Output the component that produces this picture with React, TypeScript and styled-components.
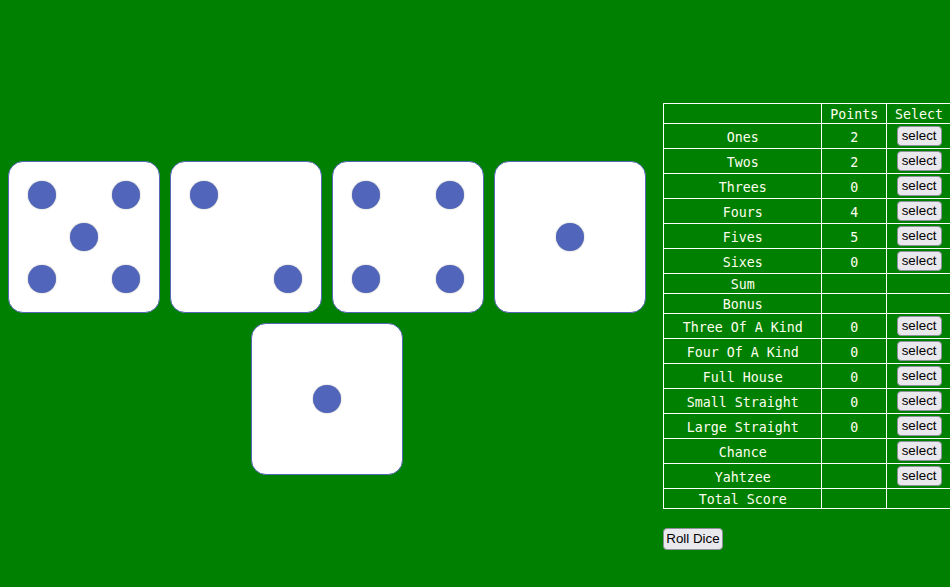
import React from "react";
import styled, { createGlobalStyle } from "styled-components";

const GlobalStyle = createGlobalStyle`
  html {
    overflow: hidden;
    background: #008000;
  }
  body {
    margin: 8px 0 8px 8px;
    background: #008000;
    font-family: "DejaVu Sans Mono", monospace;
  }
`;

const Page = styled.div`
  display: flex;
  align-items: flex-start;
  overflow: hidden;
  height: 571px;
`;

const DiceArea = styled.div`
  flex: 0 0 638px;
  width: 638px;
  margin-top: 153px;
  display: flex;
  flex-wrap: wrap;
  justify-content: center;
  gap: 10px;
`;

const Die = styled.div`
  width: 150px;
  height: 150px;
  box-sizing: content-box;
  border: 1px solid #5667b5;
  border-radius: 15px;
  background: #ffffff;
  display: grid;
  grid-template-columns: repeat(3, 28px);
  grid-template-rows: repeat(3, 28px);
  gap: 14px;
  align-content: center;
  justify-content: center;
`;

const Pip = styled.div<{ $on: boolean }>`
  width: 28px;
  height: 28px;
  border-radius: 50%;
  background: ${(p) => (p.$on ? "#5166bb" : "transparent")};
  box-shadow: ${(p) => (p.$on ? "0 0 1.5px rgba(80, 80, 80, 0.6)" : "none")};
`;

const Sidebar = styled.div`
  flex: 0 0 auto;
  margin-left: 17px;
  margin-top: 95px;
  display: flex;
  flex-direction: column;
  align-items: flex-start;
`;

const Table = styled.table`
  border-collapse: collapse;
  width: 289px;
  color: #fffff0;
  font-family: "DejaVu Sans Mono", monospace;
  font-size: 13.3px;
`;

const Cell = styled.td<{ $btn?: boolean }>`
  border: 1px solid #ffffff;
  text-align: center;
  vertical-align: middle;
  line-height: 17px;
  padding: ${(p) => (p.$btn ? "2px 0" : "2px 0 0")};
  white-space: nowrap;
`;

const HeadCell = styled.th<{ $w: number }>`
  width: ${(p) => p.$w}px;
  border: 1px solid #ffffff;
  text-align: center;
  vertical-align: middle;
  line-height: 17px;
  padding: 2px 0 0;
  font-weight: normal;
`;

const SelectButton = styled.button`
  font-family: "Liberation Sans", Arial, sans-serif;
  font-size: 13.33px;
  height: 20px;
  line-height: 16px;
  padding: 0 4px;
  border: 1px solid #8f8f9d;
  border-radius: 4px;
  background: #e9e9ed;
  color: #000;
  display: block;
  margin: 0 auto;
`;

const RollButton = styled.button`
  margin-top: 19px;
  font-family: "Liberation Sans", Arial, sans-serif;
  font-size: 13.33px;
  height: 22px;
  width: 60px;
  line-height: 18px;
  padding: 0;
  border: 1px solid #8f8f9d;
  border-radius: 4px;
  background: #e9e9ed;
  color: #000;
`;

const pipMap: Record<number, number[]> = {
  1: [4],
  2: [0, 8],
  3: [0, 4, 8],
  4: [0, 2, 6, 8],
  5: [0, 2, 4, 6, 8],
  6: [0, 2, 3, 5, 6, 8],
};

const dice = [5, 2, 4, 1, 1];

type Row = { name: string; points?: string; select: boolean };

const rows: Row[] = [
  { name: "Ones", points: "2", select: true },
  { name: "Twos", points: "2", select: true },
  { name: "Threes", points: "0", select: true },
  { name: "Fours", points: "4", select: true },
  { name: "Fives", points: "5", select: true },
  { name: "Sixes", points: "0", select: true },
  { name: "Sum", select: false },
  { name: "Bonus", select: false },
  { name: "Three Of A Kind", points: "0", select: true },
  { name: "Four Of A Kind", points: "0", select: true },
  { name: "Full House", points: "0", select: true },
  { name: "Small Straight", points: "0", select: true },
  { name: "Large Straight", points: "0", select: true },
  { name: "Chance", select: true },
  { name: "Yahtzee", select: true },
  { name: "Total Score", select: false },
];

export default function App() {
  return (
    <>
      <GlobalStyle />
      <Page>
        <DiceArea>
          {dice.map((v, i) => (
            <Die key={i}>
              {Array.from({ length: 9 }).map((_, k) => (
                <Pip key={k} $on={pipMap[v].includes(k)} />
              ))}
            </Die>
          ))}
        </DiceArea>
        <Sidebar>
          <Table>
            <thead>
              <tr>
                <HeadCell $w={158}></HeadCell>
                <HeadCell $w={64}>Points</HeadCell>
                <HeadCell $w={64}>Select</HeadCell>
              </tr>
            </thead>
            <tbody>
              {rows.map((r) => (
                <tr key={r.name}>
                  <Cell>{r.name}</Cell>
                  <Cell>{r.points ?? ""}</Cell>
                  <Cell $btn={r.select}>
                    {r.select ? <SelectButton>select</SelectButton> : null}
                  </Cell>
                </tr>
              ))}
            </tbody>
          </Table>
          <RollButton>Roll Dice</RollButton>
        </Sidebar>
      </Page>
    </>
  );
}
